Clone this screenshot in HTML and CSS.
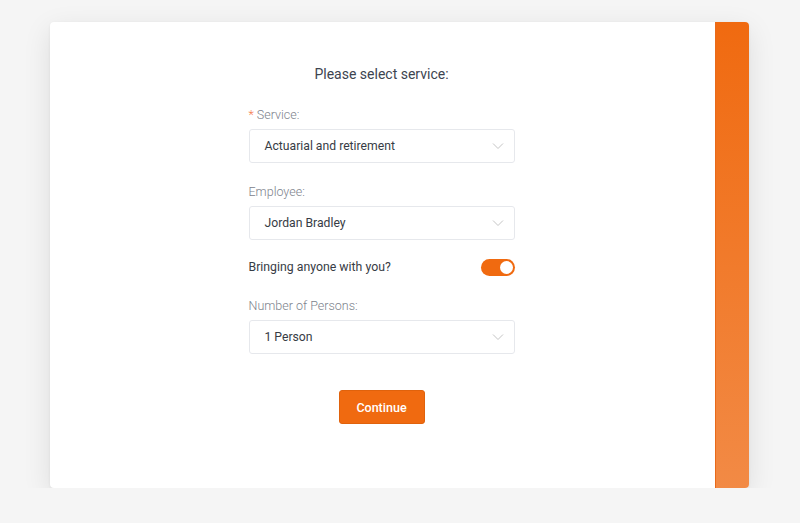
FILE: index.html
```html
<!DOCTYPE html>
<html>
<head>
<meta charset="utf-8">
<link rel="stylesheet" href="styles.css">
</head>
<body>
<div class="page">
  <div class="card">
    <div class="main">
      <form class="form">
        <h2 class="title">Please select service:</h2>
        <div class="field">
          <label class="label"><span class="req">*</span> Service:</label>
          <div class="select"><span>Actuarial and retirement</span>
            <svg class="chev" width="12" height="8" viewBox="0 0 12 8"><path d="M1 1.5 L6 6.5 L11 1.5" fill="none" stroke="#c4c4c4" stroke-width="1"/></svg>
          </div>
        </div>
        <div class="field">
          <label class="label">Employee:</label>
          <div class="select"><span>Jordan Bradley</span>
            <svg class="chev" width="12" height="8" viewBox="0 0 12 8"><path d="M1 1.5 L6 6.5 L11 1.5" fill="none" stroke="#c4c4c4" stroke-width="1"/></svg>
          </div>
        </div>
        <div class="toggle-row">
          <span class="toggle-label">Bringing anyone with you?</span>
          <span class="switch"><span class="knob"></span></span>
        </div>
        <div class="field">
          <label class="label">Number of Persons:</label>
          <div class="select"><span>1 Person</span>
            <svg class="chev" width="12" height="8" viewBox="0 0 12 8"><path d="M1 1.5 L6 6.5 L11 1.5" fill="none" stroke="#c4c4c4" stroke-width="1"/></svg>
          </div>
        </div>
        <div class="actions">
          <button type="button" class="btn">Continue</button>
        </div>
      </form>
    </div>
    <div class="side"></div>
  </div>
</div>
</body>
</html>
```

FILE: styles.css
```css
html, body {
  margin: 0;
  padding: 0;
  background: #f5f5f5;
  font-family: Roboto, "Liberation Sans", sans-serif;
}
.page {
  padding: 22px 51px 0 50px;
}
.card {
  display: grid;
  grid-template-columns: 1fr 34px;
  height: 466px;
  background: #fff;
  border-radius: 4px;
  box-shadow: 0 8px 28px rgba(0,0,0,0.10), 0 1px 3px rgba(0,0,0,0.06);
  overflow: hidden;
}
.main {
  display: flex;
  justify-content: center;
  padding-right: 2px;
}
.form {
  width: 266px;
  padding-top: 42px;
}
.title {
  margin: 0 0 22px;
  text-align: center;
  font-size: 14px;
  font-weight: 400;
  line-height: 20px;
  color: #3d4450;
}
.field {
  margin-bottom: 20px;
}
.label {
  display: block;
  font-size: 12.5px;
  line-height: 18px;
  color: #7c828c;
  font-weight: 300;
  margin-bottom: 5px;
}
.req {
  color: #f5794a;
}
.select {
  height: 34px;
  box-sizing: border-box;
  border: 1px solid #e6e8ec;
  border-radius: 3px;
  display: flex;
  align-items: center;
  justify-content: space-between;
  padding: 0 10px 0 15px;
  font-size: 12.2px;
  color: #373c45;
}
.chev {
  display: block;
}
.toggle-row {
  display: flex;
  justify-content: space-between;
  align-items: center;
  height: 20px;
  margin: -3px 0 20px;
}
.toggle-label {
  font-size: 12.3px;
  color: #373c45;
}
.switch {
  width: 34px;
  height: 17px;
  border-radius: 9px;
  background: #f06a10;
  display: flex;
  align-items: center;
  justify-content: flex-end;
  padding: 0 2px;
  box-sizing: border-box;
}
.knob {
  width: 13px;
  height: 13px;
  border-radius: 50%;
  background: #fff;
}
.actions {
  display: flex;
  justify-content: center;
  padding-top: 16px;
}
.btn {
  width: 86px;
  height: 34px;
  border: 1px solid #e0620c;
  border-radius: 3px;
  background: #f06a10;
  color: #fff;
  font-family: Roboto, "Liberation Sans", sans-serif;
  font-size: 12.5px;
  font-weight: 500;
}
.side {
  background: linear-gradient(180deg, #f06a10 0%, #f28a45 100%);
  border-left: 1px solid #e86a1a;
}
```
